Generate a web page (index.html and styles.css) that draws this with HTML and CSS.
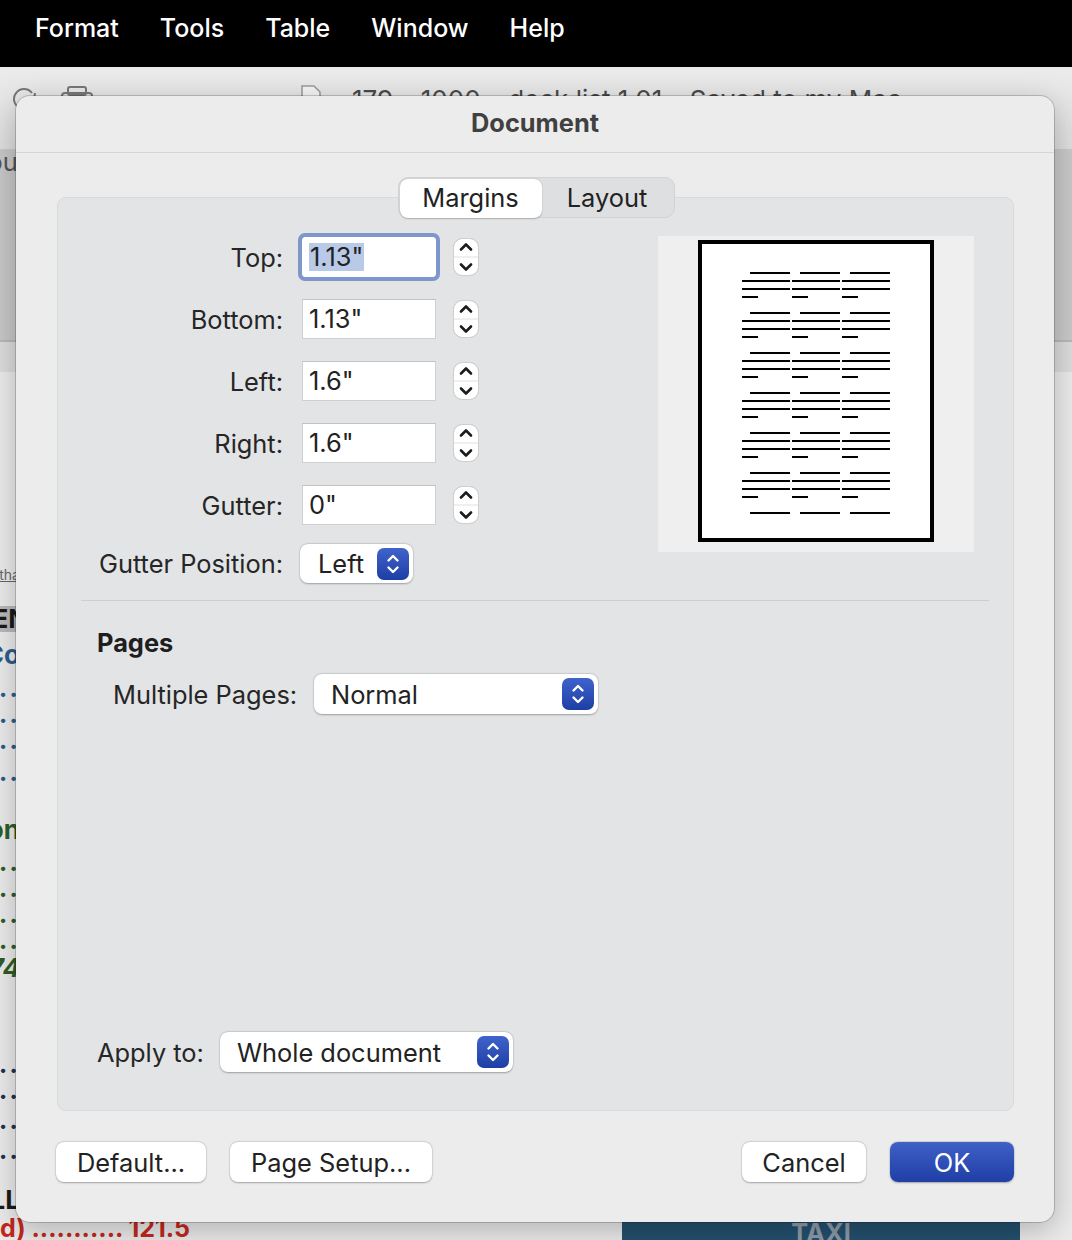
FILE: index.html
```html
<!DOCTYPE html>
<html>
<head>
<meta charset="utf-8">
<link rel="stylesheet" href="styles.css">
</head>
<body>
<div class="menubar">
  <span>Format</span><span>Tools</span><span>Table</span><span>Window</span><span>Help</span>
</div>
<div class="app">
  <div class="toolbar">
    <svg class="tb-refresh" width="28" height="28" viewBox="0 0 28 28"><path d="M22 9A10 10 0 1 0 24 16" fill="none" stroke="#777" stroke-width="2"/><path d="M17 15L24 16L25 9" fill="none" stroke="#777" stroke-width="2"/></svg>
    <svg class="tb-print" width="34" height="28" viewBox="0 0 34 28"><rect x="8" y="3" width="18" height="8" rx="2" fill="none" stroke="#777" stroke-width="2"/><rect x="2" y="9" width="30" height="14" rx="3" fill="none" stroke="#777" stroke-width="2"/></svg>
    <svg class="tb-doc" width="22" height="28" viewBox="0 0 22 28"><path d="M2 2H14L20 8V26H2Z" fill="#f4f4f4" stroke="#999" stroke-width="1.5"/><rect x="5" y="14" width="8" height="6" fill="#888"/></svg>
    <span class="tb-title">179 – 1000 – deck list 1.01 – Saved to my Mac</span>
  </div>
  <div class="ribbon"><div class="rb-text">Layout</div></div>
  <div class="ruler"></div>
  <div class="docarea">
    <div class="dl small sp190">tha</div>
    <div class="dl bold shaded m18 w26">EN</div>
    <div class="dl bold blue m10">Co</div>
    <div class="dl dots blue m7">........</div>
    <div class="dl dots blue">........</div>
    <div class="dl dots blue">........</div>
    <div class="dl dots blue m6">........</div>
    <div class="dl bold green m32">Con</div>
    <div class="dl dots green m6">........</div>
    <div class="dl dots green">........</div>
    <div class="dl dots green">........</div>
    <div class="dl dots green">........</div>
    <div class="dl bold green ital m2">174</div>
    <div class="dl dots navy m70">........</div>
    <div class="dl dots navy">........</div>
    <div class="dl dots navy m4">........</div>
    <div class="dl dots navy m4">........</div>
    <div class="dl bold m24">ALL</div>
    <div class="lastrow">
      <div class="dl bold red wide">(Tossed) ........... 121.5</div>
      <div class="taxi">TAXI</div>
    </div>
  </div>

  <div class="dialog">
    <div class="dlg-title">Document</div>
    <div class="dlg-body">
      <div class="tabs">
        <span class="tab on">Margins</span>
        <span class="tab">Layout</span>
      </div>
      <div class="group">
        <div class="upper">
          <div class="form">
            <div class="frow">
              <label class="flabel">Top:</label>
              <div class="field focus"><span class="sel">1.13"</span></div>
              <svg class="stepper" width="26" height="38" viewBox="0 0 26 38"><rect x="0.5" y="0.5" width="25" height="37" rx="9" fill="#fff" stroke="#cfcfcf"/><path d="M1 19H25" stroke="#e0e0e0"/><path d="M8 11.5L13 6.5L18 11.5M8 26.5L13 31.5L18 26.5" fill="none" stroke="#1c1c1c" stroke-width="2.6" stroke-linecap="round" stroke-linejoin="round"/></svg>
            </div>
            <div class="frow">
              <label class="flabel">Bottom:</label>
              <div class="field">1.13"</div>
              <svg class="stepper" width="26" height="38" viewBox="0 0 26 38"><rect x="0.5" y="0.5" width="25" height="37" rx="9" fill="#fff" stroke="#cfcfcf"/><path d="M1 19H25" stroke="#e0e0e0"/><path d="M8 11.5L13 6.5L18 11.5M8 26.5L13 31.5L18 26.5" fill="none" stroke="#1c1c1c" stroke-width="2.6" stroke-linecap="round" stroke-linejoin="round"/></svg>
            </div>
            <div class="frow">
              <label class="flabel">Left:</label>
              <div class="field">1.6"</div>
              <svg class="stepper" width="26" height="38" viewBox="0 0 26 38"><rect x="0.5" y="0.5" width="25" height="37" rx="9" fill="#fff" stroke="#cfcfcf"/><path d="M1 19H25" stroke="#e0e0e0"/><path d="M8 11.5L13 6.5L18 11.5M8 26.5L13 31.5L18 26.5" fill="none" stroke="#1c1c1c" stroke-width="2.6" stroke-linecap="round" stroke-linejoin="round"/></svg>
            </div>
            <div class="frow">
              <label class="flabel">Right:</label>
              <div class="field">1.6"</div>
              <svg class="stepper" width="26" height="38" viewBox="0 0 26 38"><rect x="0.5" y="0.5" width="25" height="37" rx="9" fill="#fff" stroke="#cfcfcf"/><path d="M1 19H25" stroke="#e0e0e0"/><path d="M8 11.5L13 6.5L18 11.5M8 26.5L13 31.5L18 26.5" fill="none" stroke="#1c1c1c" stroke-width="2.6" stroke-linecap="round" stroke-linejoin="round"/></svg>
            </div>
            <div class="frow last">
              <label class="flabel">Gutter:</label>
              <div class="field">0"</div>
              <svg class="stepper" width="26" height="38" viewBox="0 0 26 38"><rect x="0.5" y="0.5" width="25" height="37" rx="9" fill="#fff" stroke="#cfcfcf"/><path d="M1 19H25" stroke="#e0e0e0"/><path d="M8 11.5L13 6.5L18 11.5M8 26.5L13 31.5L18 26.5" fill="none" stroke="#1c1c1c" stroke-width="2.6" stroke-linecap="round" stroke-linejoin="round"/></svg>
            </div>
            <div class="frow gpos">
              <label class="flabel">Gutter Position:</label>
              <div class="popup pop-left">
                <span class="pop-text">Left</span>
                <span class="knob"><svg width="32" height="32" viewBox="0 0 32 32"><path d="M11.5 12.5L16 8L20.5 12.5M11.5 19.5L16 24L20.5 19.5" fill="none" stroke="#fff" stroke-width="2.4" stroke-linecap="round" stroke-linejoin="round"/></svg></span>
              </div>
            </div>
          </div>
          <div class="preview">
            <svg width="316" height="316" viewBox="0 0 316 316">
              <defs>
                <g id="blk" stroke="#000" stroke-width="2">
                  <path d="M92 0H132M142 0H182M192 0H232M84 8H132M134 8H182M184 8H232M84 16H132M134 16H182M184 16H232M84 24H100M134 24H150M184 24H200"/>
                </g>
              </defs>
              <rect x="42" y="6" width="232" height="298" fill="#fff" stroke="#000" stroke-width="4"/>
              <use href="#blk" y="37"/>
              <use href="#blk" y="77"/>
              <use href="#blk" y="117"/>
              <use href="#blk" y="157"/>
              <use href="#blk" y="197"/>
              <use href="#blk" y="237"/>
              <path d="M92 277H132M142 277H182M192 277H232" stroke="#000" stroke-width="2"/>
            </svg>
          </div>
        </div>
        <div class="sep"></div>
        <div class="pages-h">Pages</div>
        <div class="mp-row">
          <span class="mp-label">Multiple Pages:</span>
          <div class="popup pop-mp">
            <span class="pop-text">Normal</span>
            <span class="knob"><svg width="32" height="32" viewBox="0 0 32 32"><path d="M11.5 12.5L16 8L20.5 12.5M11.5 19.5L16 24L20.5 19.5" fill="none" stroke="#fff" stroke-width="2.4" stroke-linecap="round" stroke-linejoin="round"/></svg></span>
          </div>
        </div>
        <div class="apply-row">
          <span class="ap-label">Apply to:</span>
          <div class="popup pop-apply">
            <span class="pop-text">Whole document</span>
            <span class="knob"><svg width="32" height="32" viewBox="0 0 32 32"><path d="M11.5 12.5L16 8L20.5 12.5M11.5 19.5L16 24L20.5 19.5" fill="none" stroke="#fff" stroke-width="2.4" stroke-linecap="round" stroke-linejoin="round"/></svg></span>
          </div>
        </div>
      </div>
      <div class="buttons">
        <button class="btn b-default">Default...</button>
        <button class="btn b-setup">Page Setup...</button>
        <span class="spacer"></span>
        <button class="btn b-cancel">Cancel</button>
        <button class="btn b-ok">OK</button>
      </div>
    </div>
  </div>
</div>
</body>
</html>
```

FILE: styles.css
```css
* { box-sizing: border-box; margin: 0; padding: 0; }
html, body { width: 1072px; height: 1240px; overflow: hidden; }
body {
  font-family: Inter, "Noto Sans", "Liberation Sans", sans-serif;
  font-size: 25.4px;
  color: #262626;
  background: #e8e8e8;
}

/* menu bar */
.menubar {
  height: 67px;
  background: #000;
  color: #fff;
  display: flex;
  gap: 41px;
  padding: 12px 0 0 35px;
  font-weight: 500;
  font-size: 25px;
  line-height: 32px;
}

/* background app */
.app {
  position: relative;
  height: 1173px;
  display: flex;
  flex-direction: column;
}
.toolbar {
  height: 83px;
  flex: none;
  background: linear-gradient(#ebebeb, #dedede);
  display: flex;
  align-items: flex-start;
  padding: 17px 0 0 10px;
  border-bottom: 1px solid #c9c9c9;
}
.tb-print { margin-left: 22px; }
.tb-doc { margin-left: 206px; }
.tb-title { margin-left: 30px; color: #4a4a4a; line-height: 32px; font-size: 26px; }
.ribbon {
  height: 190px;
  flex: none;
  background: linear-gradient(90deg, #c7c7c7, #cfcfcf 50%, #c9c9c9);
}
.rb-text {
  width: 30px;
  display: flex;
  justify-content: flex-end;
  color: #555;
  white-space: nowrap;
  line-height: 32px;
  margin-top: -4px;
  padding-right: 4px;
}
.ruler {
  height: 32px;
  flex: none;
  border-top: 2px solid #b8b8b8;
  background: #dcdcdc;
}
.docarea {
  flex: 1;
  background: #ebebeb;
  display: flex;
  flex-direction: column;
}
.dl {
  width: 20px;
  height: 26px;
  line-height: 26px;
  display: flex;
  justify-content: flex-end;
  white-space: nowrap;
  font-size: 26px;
  color: #1a1a1a;
}
.w26 { width: 28px; }
.small { font-size: 14px; color: #666; text-decoration: underline; }
.bold { font-weight: 700; }
.shaded { background: #b9b9b9; }
.blue { color: #2b5e8c; }
.green { color: #2f5d27; }
.navy { color: #22324d; }
.red { color: #c4281c; font-size: 25px; }
.ital { font-style: italic; }
.dots { font-weight: 700; letter-spacing: 2px; }
.wide { width: 190px; }
.sp190 { margin-top: 190px; }
.m2 { margin-top: 2px; }
.m4 { margin-top: 4px; }
.m6 { margin-top: 6px; }
.m7 { margin-top: 7px; }
.m10 { margin-top: 10px; }
.m18 { margin-top: 18px; }
.m24 { margin-top: 24px; }
.m32 { margin-top: 32px; }
.m70 { margin-top: 70px; }
.lastrow { display: flex; margin-top: 2px; }
.taxi {
  margin-left: 432px;
  margin-top: 7px;
  width: 398px;
  height: 30px;
  background: #24506e;
  color: #8e9ba7;
  font-weight: 700;
  text-align: center;
  line-height: 22px;
}

/* dialog */
.dialog {
  position: absolute;
  top: 29px;
  left: 16px;
  width: 1038px;
  height: 1126px;
  background: #ececec;
  border-radius: 14px;
  box-shadow: 0 0 0 1px rgba(0,0,0,0.18), 0 8px 30px rgba(0,0,0,0.25);
  display: flex;
  flex-direction: column;
  z-index: 2;
}
.dlg-title {
  height: 57px;
  flex: none;
  border-bottom: 1px solid #d5d5d5;
  text-align: center;
  font-weight: 700;
  color: #404040;
  line-height: 54px;
}
.dlg-body {
  flex: 1;
  display: flex;
  flex-direction: column;
  padding: 24px 40px 40px 40px;
}
.tabs {
  position: relative;
  z-index: 1;
  align-self: center;
  display: flex;
  height: 41px;
  padding: 1px;
  border-radius: 10px;
  background: #dedfe1;
  border: 1px solid #d3d3d5;
  margin-left: 2px;
}
.tab {
  height: 39px;
  line-height: 38px;
  text-align: center;
  color: #222;
  width: 131px;
}
.tab.on {
  width: 142px;
  background: #fff;
  border-radius: 8px;
  box-shadow: 0 0.5px 1.5px rgba(0,0,0,0.25);
}

.group {
  margin-top: -21px;
  margin-left: 1px;
  height: 914px;
  background: #e3e4e6;
  border: 1px solid #d8d9db;
  border-radius: 9px;
  display: flex;
  flex-direction: column;
  padding: 0 39px 38px 0;
}
.upper {
  display: flex;
  padding-top: 38px;
}
.form { padding-top: 1px; }
.frow {
  display: flex;
  align-items: center;
  height: 40px;
  margin-bottom: 22px;
}
.frow.last { margin-bottom: 19px; }
.frow.gpos { height: 39px; margin-bottom: 0; }
.flabel {
  width: 225px;
  text-align: right;
  margin-right: 19px;
  color: #262626;
}
.field {
  width: 134px;
  height: 40px;
  background: #fff;
  border: 1px solid #d0d0d0;
  border-top-color: #c2c2c2;
  padding-left: 6px;
  line-height: 38px;
  color: #222;
}
.field.focus {
  box-shadow: 0 0 0 4px #7f96cb;
  border-radius: 3px;
  border-color: #fff;
}
.sel {
  background: #b8cae8;
  display: inline-block;
  line-height: 28px;
  padding: 0 1px;
}
.stepper { margin-left: 17px; filter: drop-shadow(0 0.5px 0.5px rgba(0,0,0,0.15)); }

.popup {
  display: flex;
  align-items: center;
  justify-content: space-between;
  height: 40px;
  background: #fff;
  border-radius: 8px;
  box-shadow: 0 0.5px 2px rgba(0,0,0,0.28), 0 0 0 0.5px rgba(0,0,0,0.08);
  padding: 0 4px 0 17px;
}
.pop-left { width: 113px; height: 39px; margin-left: -2px; padding-left: 18px; }
.pop-mp { width: 284px; }
.pop-apply { width: 293px; }
.pop-text { color: #222; }
.knob {
  width: 32px;
  height: 32px;
  border-radius: 7px;
  background: linear-gradient(#4063cc, #1d3ea4);
  display: flex;
}

.preview {
  margin-left: auto;
  width: 316px;
  height: 316px;
  background: #efefef;
}
.preview svg { display: block; }

.sep {
  height: 1px;
  margin: 17px 0 0 23px;
  margin-right: -15px;
  background: #cdced0;
}
.pages-h {
  font-weight: 700;
  margin: 26px 0 0 39px;
  line-height: 32px;
  color: #1e1e1e;
}
.mp-row {
  display: flex;
  align-items: center;
  margin: 15px 0 0 55px;
}
.mp-label { width: 201px; white-space: nowrap; }
.apply-row {
  display: flex;
  align-items: center;
  margin: auto 0 0 39px;
}
.ap-label { width: 123px; white-space: nowrap; }

.buttons {
  display: flex;
  margin-top: 31px;
  height: 40px;
  gap: 24px;
}
.spacer { flex: 1; }
.btn {
  font-family: inherit;
  font-size: 25.4px;
  height: 40px;
  border: none;
  background: #fff;
  border-radius: 8px;
  color: #222;
  box-shadow: 0 0.5px 2px rgba(0,0,0,0.28), 0 0 0 0.5px rgba(0,0,0,0.08);
}
.b-default { width: 150px; }
.b-setup { width: 202px; }
.b-cancel { width: 124px; }
.b-ok {
  width: 124px;
  color: #fff;
  background: linear-gradient(#3f61c6, #1f3ea6);
}
```
